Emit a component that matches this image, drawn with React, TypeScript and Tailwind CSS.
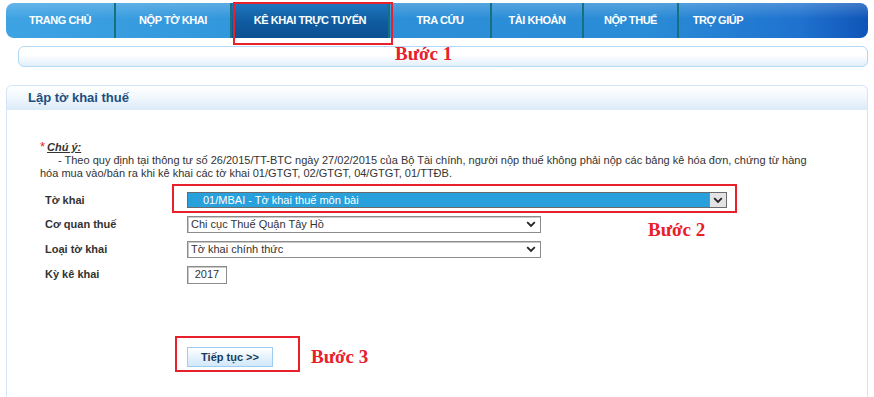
import React from "react";

const font = { fontFamily: '"Liberation Sans", Arial, sans-serif' };

function Chevron({ className = "" }: { className?: string }) {
  return (
    <svg width="10" height="7" viewBox="0 0 10 7" className={className}>
      <path d="M1.2 1.2 L5 5 L8.8 1.2" fill="none" stroke="#222" strokeWidth="1.8" />
    </svg>
  );
}

const navItems: { label: string; w: string; active?: boolean; sep?: boolean }[] = [
  { label: "TRANG CHỦ", w: "w-[110px]", sep: true },
  { label: "NỘP TỜ KHAI", w: "w-[116px]", sep: true },
  { label: "KÊ KHAI TRỰC TUYẾN", w: "w-[158px]", active: true, sep: true },
  { label: "TRA CỨU", w: "w-[102px]", sep: true },
  { label: "TÀI KHOẢN", w: "w-[92px]", sep: true },
  { label: "NỘP THUẾ", w: "w-[95px]", sep: true },
  { label: "TRỢ GIÚP", w: "w-[78px]" },
];

export default function App() {
  return (
    <div className="relative w-[874px] h-[397px] overflow-hidden bg-white" style={font}>
      {/* Nav bar */}
      <div className="ml-[6px] mt-[3px] flex h-[35px] w-[862px] overflow-hidden rounded-[8px] bg-[linear-gradient(to_bottom,rgba(255,255,255,0.2),rgba(255,255,255,0)_45%),linear-gradient(to_right,#3ea3e3,#2c90d8_40%,#2a8bd6_75%,#1f72cf_92%,#0f55b8)]">
        {navItems.map((it) => (
          <div
            key={it.label}
            className={`flex h-full shrink-0 items-center justify-center text-[11px] font-bold tracking-[-0.45px] text-white ${it.w} ${
              it.sep ? "border-r-2 border-[#16707e]" : ""
            } ${it.active ? "bg-[linear-gradient(to_bottom,#1f78c0,#0f5b9f_55%,#0b5092)]" : ""}`}
          >
            {it.label}
          </div>
        ))}
      </div>

      {/* Sub bar */}
      <div className="ml-[18px] mt-[8px] h-[21px] w-[850px] rounded-[6px] border border-[#b3d9f6] bg-[linear-gradient(to_bottom,#ffffff,#ffffff_40%,#e1effb)]" />

      {/* Panel */}
      <div className="ml-[6px] mt-[18px] h-[320px] w-[862px] rounded-t-[6px] border border-b-0 border-[#d3e6f8]">
        <div className="flex h-[24px] items-center rounded-t-[6px] bg-[linear-gradient(to_bottom,#ffffff,#f4f9fe_40%,#dbeaf8)] pl-[21px] text-[13px] font-bold text-[#1d4e7f]">
          Lập tờ khai thuế
        </div>

        <div className="pl-[33px] pr-[20px] pt-[31px] text-[11px] text-[#333]">
          <div className="flex h-[12px] items-center leading-[12px]">
            <span className="mr-[2px] text-[13px] text-[#e2232a]">*</span>
            <span className="font-bold italic underline">Chú ý:</span>
          </div>
          <div className="mt-[1px] leading-[13px]">
            <span className="pl-[18px]">- Theo quy định tại thông tư số 26/2015/TT-BTC ngày 27/02/2015 của Bộ Tài chính, người nộp thuế không phải nộp các bảng kê hóa đơn, chứng từ hàng</span>
            <br />
            hóa mua vào/bán ra khi kê khai các tờ khai 01/GTGT, 02/GTGT, 04/GTGT, 01/TTĐB.
          </div>

          {/* Form */}
          <div className="mt-[8px] flex flex-col">
            <div className="flex h-[24px] items-center">
              <div className="w-[147px] pl-[5px] font-bold">Tờ khai</div>
              <div className="flex h-[16px] w-[540px] items-stretch border border-[#6b6b6b] bg-[#27a0db]">
                <div className="flex flex-1 items-center pl-[15px] text-white">01/MBAI - Tờ khai thuế môn bài</div>
                <div className="flex w-[17px] items-center justify-center border-l border-[#8a8a8a] bg-[#e3e3e3]">
                  <Chevron />
                </div>
              </div>
            </div>
            <div className="flex h-[25px] items-center">
              <div className="w-[147px] pl-[5px] font-bold">Cơ quan thuế</div>
              <div className="flex h-[17px] w-[354px] items-center justify-between border border-[#8c8c8c] bg-white pl-[3px] pr-[4px] shadow-[inset_1px_1px_0_#c8c8c8]">
                <span>Chi cục Thuế Quận Tây Hồ</span>
                <Chevron />
              </div>
            </div>
            <div className="flex h-[25px] items-center">
              <div className="w-[147px] pl-[5px] font-bold">Loại tờ khai</div>
              <div className="flex h-[17px] w-[354px] items-center justify-between border border-[#8c8c8c] bg-white pl-[3px] pr-[4px] shadow-[inset_1px_1px_0_#c8c8c8]">
                <span>Tờ khai chính thức</span>
                <Chevron />
              </div>
            </div>
            <div className="flex h-[25px] items-center">
              <div className="w-[147px] pl-[5px] font-bold">Kỳ kê khai</div>
              <div className="flex h-[18px] w-[40px] items-center justify-center border border-[#8c8c8c] bg-white shadow-[inset_1px_1px_0_#c8c8c8]">
                2017
              </div>
            </div>
          </div>

          <div className="ml-[147px] mt-[60px]">
            <button className="flex h-[20px] w-[86px] items-center justify-center border border-[#9fcdf2] bg-[linear-gradient(to_bottom,#ffffff,#e6f2fc_50%,#d2e8fa)] text-[11px] font-bold text-[#163a5c]">
              Tiếp tục &gt;&gt;
            </button>
          </div>
        </div>
      </div>

      {/* Annotations */}
      <div className="absolute left-[233px] top-[2px] h-[43px] w-[160px] border-2 border-[#e8202a]" />
      <div className="absolute left-[395px] top-[40px] text-[19px] font-bold text-[#e8202a]" style={{ fontFamily: '"Liberation Serif", "Times New Roman", serif' }}>
        Bước 1
      </div>
      <div className="absolute left-[172px] top-[184px] h-[29px] w-[565px] border-2 border-[#e8202a]" />
      <div className="absolute left-[648px] top-[216px] text-[19px] font-bold text-[#e8202a]" style={{ fontFamily: '"Liberation Serif", "Times New Roman", serif' }}>
        Bước 2
      </div>
      <div className="absolute left-[175px] top-[336px] h-[36px] w-[125px] border-2 border-[#e8202a]" />
      <div className="absolute left-[311px] top-[343px] text-[19px] font-bold text-[#e8202a]" style={{ fontFamily: '"Liberation Serif", "Times New Roman", serif' }}>
        Bước 3
      </div>
    </div>
  );
}
